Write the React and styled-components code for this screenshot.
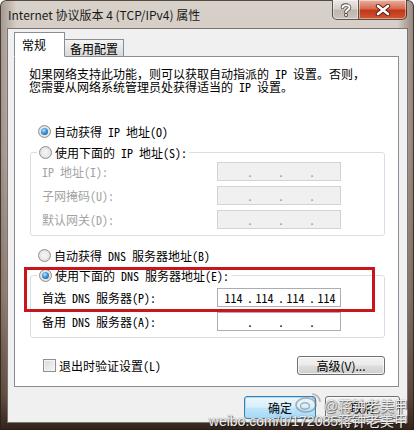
import React from "react"
import styled, { createGlobalStyle, css } from "styled-components"

const GlobalStyle = createGlobalStyle`
    html, body {
        margin: 0;
        padding: 0;
        background: #ffffff;
    }

    body {
        font-family: "Noto Sans Mono CJK SC", "Noto Sans CJK SC", sans-serif;
        font-size: 12px;
        color: #000;
    }
`

const StyledWindow = styled.div`
    width: 414px;
    height: 430px;
    box-sizing: border-box;
    padding: 0 6px 7px 7px;

    display: flex;
    flex-direction: column;

    position: relative;
    overflow: hidden;

    border-radius: 6px 6px 0 0;
    box-shadow: inset 0 0 0 1px rgba(40, 30, 25, .75);
    background:
        linear-gradient(90deg, rgba(60,40,30,.35), rgba(255,255,255,0) 4%, rgba(255,255,255,0) 96%, rgba(60,40,30,.45)),
        linear-gradient(180deg, #d8d1ca 0%, #cdc3b9 35%, #a8968a 70%, #6e5a4c 92%, #2e2119 100%);
`

const StyledTitleBar = styled.div`
    height: 28px;

    display: flex;
    align-items: flex-start;
`

const StyledTitle = styled.span`
    margin-left: 1px;

    font-family: "Noto Sans CJK SC", sans-serif;
    font-size: 12px;
    line-height: 30px;
    color: #1a1a1a;
`

const StyledCaption = styled.div`
    margin: 0 1px 0 auto;

    display: flex;
`

const StyledCaptionButton = styled.div`
    width: 27px;
    height: 20px;
    box-sizing: border-box;

    display: flex;
    align-items: center;
    justify-content: center;

    border: 1px solid rgba(50, 40, 35, .75);
    border-top: none;
    border-radius: 0 0 0 5px;
    box-shadow: inset 0 0 0 1px rgba(255, 255, 255, .45);
    background: linear-gradient(180deg, #ece8e4 0%, #d6d0cb 48%, #bdb5ae 52%, #cbc4be 100%);

    ${props => props.close && `
        width: 48px;
        border-left: none;
        border-radius: 0 0 5px 0;
        background: linear-gradient(180deg, #eab2a2 0%, #d46a4e 46%, #c2361a 54%, #d0562f 100%);
    `}
`

const StyledTabStrip = styled.div`
    height: 25px;
    margin-bottom: -1px;

    display: flex;
    align-items: flex-end;

    position: relative;
    z-index: 1;
`

const StyledTab = styled.div`
    height: 18px;
    box-sizing: border-box;
    padding: 0 5px;

    font-family: "Noto Sans CJK SC", sans-serif;
    line-height: 17px;

    border: 1px solid #898c95;
    border-left: none;
    background: linear-gradient(180deg, #f4f4f4 0%, #e6e6e6 50%, #d9d9d9 100%);

    ${props => props.active && `
        height: 25px;
        padding: 0 18px 0 7px;

        line-height: 24px;

        border-left: 1px solid #898c95;
        border-bottom-color: #ffffff;
        background: #ffffff;
    `}
`

const StyledClient = styled.div`
    flex: 1;
    padding: 3px 8px 0 6px;

    display: flex;
    flex-direction: column;

    border: 1px solid #7b7470;
    background: #f0f0f0;
`

const StyledPanel = styled.div`
    height: 331px;
    box-sizing: border-box;
    padding: 10px 13px 0 15px;

    display: flex;
    flex-direction: column;

    position: relative;

    border: 1px solid #898c95;
    background: #ffffff;
`

const StyledIntro = styled.p`
    margin: 0 0 0 -1px;

    line-height: 13px;
`

const StyledOption = styled.div`
    height: 16px;
    margin-top: ${props => props.gap}px;
    padding-left: 8px;

    display: flex;
    align-items: center;
    gap: 3px;

    ${props => props.bare && `
        margin-top: 0;
        padding-left: 0;
    `}
`

const StyledRadio = styled.span`
    width: 13px;
    height: 13px;
    box-sizing: border-box;
    flex: none;

    position: relative;

    border: 1px solid #8e8f8f;
    border-radius: 50%;
    background: radial-gradient(circle at 50% 50%, #f6f6f6 0%, #ebebeb 45%, #cfcfcf 100%);

    ${props => props.checked && css`
        &::after {
            content: "";
            width: 7px;
            height: 7px;

            position: absolute;
            left: 2px;
            top: 2px;

            border-radius: 50%;
            background: radial-gradient(circle at 40% 35%, #b7e6ff 0%, #3f93db 45%, #0f4a88 100%);
        }
    `}
`

const StyledGroup = styled.fieldset`
    min-width: 0;
    margin: ${props => props.gap}px 0 0 0;
    padding: ${props => props.top}px 0 6px 0;

    border: 1px solid #d5dfe5;
    border-radius: 3px;
`

const StyledLegend = styled.legend`
    height: 16px;
    margin-left: 6px;
    padding: 0 2px;
`

const StyledField = styled.div`
    height: 19px;
    padding-left: 11px;

    display: flex;
    align-items: center;

    & + & {
        margin-top: 5px;
    }
`

const StyledFieldLabel = styled.span`
    width: 175px;

    color: ${props => props.disabled ? "#a3a3a3" : "#000000"};
`

const StyledIpBox = styled.div`
    width: 124px;
    height: 19px;
    box-sizing: border-box;
    padding-left: 2px;

    display: flex;
    align-items: center;

    border: 1px solid #abadb3;
    background: #ffffff;

    ${props => props.disabled && `
        border-color: #d3d3d3;
        background: #f0f0f0;
        color: #9a9a9a;
    `}
`

const StyledOctet = styled.span`
    width: 27px;

    text-align: center;
`

const StyledDot = styled.span`
    width: 4px;

    text-align: center;
`

const StyledFootRow = styled.div`
    height: 19px;
    margin-top: 18px;
    padding-left: 13px;

    display: flex;
    align-items: center;
    justify-content: space-between;
`

const StyledCheck = styled.span`
    display: flex;
    align-items: center;
    gap: 3px;
`

const StyledCheckBox = styled.span`
    width: 13px;
    height: 13px;
    box-sizing: border-box;

    border: 1px solid #8e8f8f;
    box-shadow: inset 0 0 0 1px #f4f4f4;
    background: linear-gradient(135deg, #d8d8d8 0%, #f7f7f7 100%);
`

const StyledButton = styled.div`
    width: ${props => props.width}px;
    height: ${props => props.height}px;
    box-sizing: border-box;

    display: flex;
    align-items: center;
    justify-content: center;

    border: 1px solid #707070;
    border-radius: 3px;
    box-shadow: inset 0 0 0 1px rgba(255, 255, 255, .7);
    background: linear-gradient(180deg, #f2f2f2 0%, #ebebeb 48%, #dddddd 52%, #cfcfcf 100%);

    font-family: "Noto Sans CJK SC", sans-serif;

    ${props => props.primary && `
        border-color: #3c7fb1;
        box-shadow: inset 0 0 0 1px #a9dcf6;
        background: linear-gradient(180deg, #eaf6fd 0%, #d9f0fc 48%, #bee6fd 52%, #a7d9f5 100%);
    `}
`

const StyledFooter = styled.div`
    margin: 9px -1px 0 0;

    display: flex;
    justify-content: flex-end;
    gap: 9px;
`

const StyledHighlight = styled.div`
    width: 351px;
    height: 45px;
    box-sizing: border-box;

    position: absolute;
    left: 9px;
    top: 210px;

    border: 3px solid #c8161d;
    pointer-events: none;
`

const StyledWatermark = styled.div`
    position: absolute;
    right: 6px;
    bottom: 1px;

    display: flex;
    flex-direction: column;
    align-items: flex-end;

    font-family: "Liberation Sans", "Noto Sans CJK SC", sans-serif;
    font-size: 14px;
    line-height: 15px;
    color: rgba(255, 255, 255, .9);
    text-shadow: 0 0 1px #555, 1px 1px 1px rgba(0, 0, 0, .55);
    pointer-events: none;
`

const StyledWatermarkTop = styled.div`
    display: flex;
    align-items: flex-end;
    gap: 1px;
`

const fields = [
    { label: "IP 地址(I):" },
    { label: "子网掩码(U):" },
    { label: "默认网关(D):" },
]

const IpBox = ({ values, disabled }) => (
    <StyledIpBox disabled={disabled}>
        {[0, 1, 2, 3].map(i => (
            <React.Fragment key={i}>
                <StyledOctet>{values ? values[i] : ""}</StyledOctet>
                {i < 3 && <StyledDot>.</StyledDot>}
            </React.Fragment>
        ))}
    </StyledIpBox>
)

const Help = () => (
    <svg width="12" height="14" viewBox="0 0 12 14">
        <path d="M2.5 4.5 C2.5 1.5 9.5 1.2 9.5 4.5 C9.5 6.8 6 6.8 6 9" fill="none" stroke="#4b4540" strokeWidth="3.6" strokeLinecap="round" />
        <path d="M2.5 4.5 C2.5 1.5 9.5 1.2 9.5 4.5 C9.5 6.8 6 6.8 6 9" fill="none" stroke="#ffffff" strokeWidth="2" strokeLinecap="round" />
        <circle cx="6" cy="12" r="1.9" fill="#4b4540" />
        <circle cx="6" cy="12" r="1.1" fill="#ffffff" />
    </svg>
)

const Close = () => (
    <svg width="16" height="12" viewBox="0 0 16 12">
        <path d="M3 2 L13 10 M13 2 L3 10" stroke="#5a1d10" strokeWidth="4.4" strokeLinecap="round" />
        <path d="M3 2 L13 10 M13 2 L3 10" stroke="#ffffff" strokeWidth="2.6" strokeLinecap="round" />
    </svg>
)

const WeiboEye = () => (
    <svg width="28" height="24" viewBox="0 0 28 24">
        <ellipse cx="11" cy="15" rx="10" ry="7" fill="none" stroke="rgba(120,120,120,.55)" strokeWidth="1.6" />
        <ellipse cx="10" cy="16" rx="4.5" ry="3.2" fill="none" stroke="rgba(120,120,120,.55)" strokeWidth="1.4" />
        <path d="M17 4 A8 8 0 0 1 25 12" fill="none" stroke="rgba(120,120,120,.5)" strokeWidth="1.6" />
        <path d="M17 8 A4 4 0 0 1 21 12" fill="none" stroke="rgba(120,120,120,.5)" strokeWidth="1.4" />
    </svg>
)

const App = () => (
    <>
        <GlobalStyle />
        <StyledWindow>
            <StyledTitleBar>
                <StyledTitle>Internet 协议版本 4 (TCP/IPv4) 属性</StyledTitle>
                <StyledCaption>
                    <StyledCaptionButton><Help /></StyledCaptionButton>
                    <StyledCaptionButton close><Close /></StyledCaptionButton>
                </StyledCaption>
            </StyledTitleBar>
            <StyledClient>
                <StyledTabStrip>
                    <StyledTab active>常规</StyledTab>
                    <StyledTab>备用配置</StyledTab>
                </StyledTabStrip>
                <StyledPanel>
                    <StyledIntro>
                        如果网络支持此功能，则可以获取自动指派的 IP 设置。否则，<br />
                        您需要从网络系统管理员处获得适当的 IP 设置。
                    </StyledIntro>

                    <StyledOption gap={30}>
                        <StyledRadio checked />自动获得 IP 地址(O)
                    </StyledOption>
                    <StyledGroup gap={5} top={2}>
                        <StyledLegend>
                            <StyledOption bare>
                                <StyledRadio />使用下面的 IP 地址(S):
                            </StyledOption>
                        </StyledLegend>
                        {fields.map(field => (
                            <StyledField key={field.label}>
                                <StyledFieldLabel disabled>{field.label}</StyledFieldLabel>
                                <IpBox disabled />
                            </StyledField>
                        ))}
                    </StyledGroup>

                    <StyledOption gap={11}>
                        <StyledRadio />自动获得 DNS 服务器地址(B)
                    </StyledOption>
                    <StyledGroup gap={4} top={5}>
                        <StyledLegend>
                            <StyledOption bare>
                                <StyledRadio checked />使用下面的 DNS 服务器地址(E):
                            </StyledOption>
                        </StyledLegend>
                        <StyledField>
                            <StyledFieldLabel>首选 DNS 服务器(P):</StyledFieldLabel>
                            <IpBox values={["114", "114", "114", "114"]} />
                        </StyledField>
                        <StyledField>
                            <StyledFieldLabel>备用 DNS 服务器(A):</StyledFieldLabel>
                            <IpBox />
                        </StyledField>
                    </StyledGroup>

                    <StyledFootRow>
                        <StyledCheck>
                            <StyledCheckBox />退出时验证设置(L)
                        </StyledCheck>
                        <StyledButton width={88} height={19}>高级(V)...</StyledButton>
                    </StyledFootRow>

                    <StyledHighlight />
                </StyledPanel>
                <StyledFooter>
                    <StyledButton primary width={72} height={23}>确定</StyledButton>
                    <StyledButton width={75} height={23}>取消</StyledButton>
                </StyledFooter>
            </StyledClient>
            <StyledWatermark>
                <StyledWatermarkTop>
                    <WeiboEye />
                    <span>@蒋钟老美甲</span>
                </StyledWatermarkTop>
                <span>weibo.com/u/172085蒋钟老美甲</span>
            </StyledWatermark>
        </StyledWindow>
    </>
)

export default App
